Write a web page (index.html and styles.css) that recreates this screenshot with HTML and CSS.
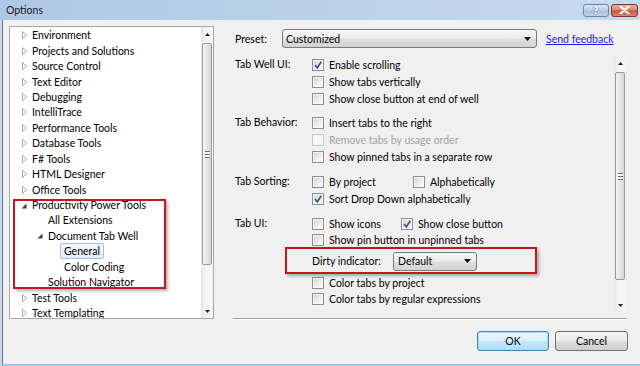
FILE: index.html
```html
<!DOCTYPE html>
<html lang="en">
<head>
    <meta charset="UTF-8">
    <title>Options</title>
    <link rel="stylesheet" href="styles.css">
</head>
<body>
    <div class="window">
        <div class="titlebar">
            <span class="title">Options</span>
            <div class="caption-buttons">
                <span class="cap-btn help">?</span>
                <span class="cap-btn close">
                    <svg width="11" height="8" viewBox="0 0 11 8"><path d="M1.5 0.5 L9.5 7.5 M9.5 0.5 L1.5 7.5" stroke="#fff" stroke-width="2.2" stroke-linecap="round"/></svg>
                </span>
            </div>
        </div>

        <div class="client">
            <div class="main">
                <!-- category tree -->
                <div class="tree">
                    <div class="tree-list">
                        <div class="tree-row lvl0"><span class="expander"><svg width="5" height="8"><path d="M0.5 0.5 L4.5 4 L0.5 7.5 Z" fill="none" stroke="#a8a8a8"/></svg></span><span class="node">Environment</span></div>
                        <div class="tree-row lvl0"><span class="expander"><svg width="5" height="8"><path d="M0.5 0.5 L4.5 4 L0.5 7.5 Z" fill="none" stroke="#a8a8a8"/></svg></span><span class="node">Projects and Solutions</span></div>
                        <div class="tree-row lvl0"><span class="expander"><svg width="5" height="8"><path d="M0.5 0.5 L4.5 4 L0.5 7.5 Z" fill="none" stroke="#a8a8a8"/></svg></span><span class="node">Source Control</span></div>
                        <div class="tree-row lvl0"><span class="expander"><svg width="5" height="8"><path d="M0.5 0.5 L4.5 4 L0.5 7.5 Z" fill="none" stroke="#a8a8a8"/></svg></span><span class="node">Text Editor</span></div>
                        <div class="tree-row lvl0"><span class="expander"><svg width="5" height="8"><path d="M0.5 0.5 L4.5 4 L0.5 7.5 Z" fill="none" stroke="#a8a8a8"/></svg></span><span class="node">Debugging</span></div>
                        <div class="tree-row lvl0"><span class="expander"><svg width="5" height="8"><path d="M0.5 0.5 L4.5 4 L0.5 7.5 Z" fill="none" stroke="#a8a8a8"/></svg></span><span class="node">IntelliTrace</span></div>
                        <div class="tree-row lvl0"><span class="expander"><svg width="5" height="8"><path d="M0.5 0.5 L4.5 4 L0.5 7.5 Z" fill="none" stroke="#a8a8a8"/></svg></span><span class="node">Performance Tools</span></div>
                        <div class="tree-row lvl0"><span class="expander"><svg width="5" height="8"><path d="M0.5 0.5 L4.5 4 L0.5 7.5 Z" fill="none" stroke="#a8a8a8"/></svg></span><span class="node">Database Tools</span></div>
                        <div class="tree-row lvl0"><span class="expander"><svg width="5" height="8"><path d="M0.5 0.5 L4.5 4 L0.5 7.5 Z" fill="none" stroke="#a8a8a8"/></svg></span><span class="node">F# Tools</span></div>
                        <div class="tree-row lvl0"><span class="expander"><svg width="5" height="8"><path d="M0.5 0.5 L4.5 4 L0.5 7.5 Z" fill="none" stroke="#a8a8a8"/></svg></span><span class="node">HTML Designer</span></div>
                        <div class="tree-row lvl0"><span class="expander"><svg width="5" height="8"><path d="M0.5 0.5 L4.5 4 L0.5 7.5 Z" fill="none" stroke="#a8a8a8"/></svg></span><span class="node">Office Tools</span></div>
                        <div class="tree-row lvl0"><span class="expander open"><svg width="6" height="6"><path d="M5.5 0.5 L5.5 5.5 L0.5 5.5 Z" fill="#3c3c3c"/></svg></span><span class="node">Productivity Power Tools</span></div>
                        <div class="tree-row lvl1"><span class="expander"></span><span class="node">All Extensions</span></div>
                        <div class="tree-row lvl1"><span class="expander open"><svg width="6" height="6"><path d="M5.5 0.5 L5.5 5.5 L0.5 5.5 Z" fill="#3c3c3c"/></svg></span><span class="node">Document Tab Well</span></div>
                        <div class="tree-row lvl2"><span class="expander"></span><span class="node selected">General</span></div>
                        <div class="tree-row lvl2"><span class="expander"></span><span class="node">Color Coding</span></div>
                        <div class="tree-row lvl1"><span class="expander"></span><span class="node">Solution Navigator</span></div>
                        <div class="tree-row lvl0"><span class="expander"><svg width="5" height="8"><path d="M0.5 0.5 L4.5 4 L0.5 7.5 Z" fill="none" stroke="#a8a8a8"/></svg></span><span class="node">Test Tools</span></div>
                        <div class="tree-row lvl0"><span class="expander"><svg width="5" height="8"><path d="M0.5 0.5 L4.5 4 L0.5 7.5 Z" fill="none" stroke="#a8a8a8"/></svg></span><span class="node">Text Templating</span></div>
                    </div>
                    <div class="scrollbar">
                        <div class="sb-arrow"><svg width="5" height="3"><path d="M2.5 0 L5 3 L0 3 Z" fill="#222"/></svg></div>
                        <div class="sb-thumb"><span class="grip"></span></div>
                        <div class="sb-track"></div>
                        <div class="sb-arrow"><svg width="5" height="3"><path d="M0 0 L5 0 L2.5 3 Z" fill="#222"/></svg></div>
                    </div>
                    <div class="callout tree-callout"></div>
                </div>

                <!-- settings page -->
                <div class="settings">
                    <div class="preset-row">
                        <span class="preset-label">Preset:</span>
                        <div class="combo preset-combo">
                            <span>Customized</span>
                            <svg width="7" height="4"><path d="M0 0 L7 0 L3.5 4 Z" fill="#111"/></svg>
                        </div>
                        <a class="link" href="#">Send feedback</a>
                    </div>

                    <div class="page">
                        <div class="options">
                            <div class="group">
                                <div class="group-label">Tab Well UI:</div>
                                <div class="controls">
                                    <div class="opt-row"><span class="check-item"><span class="checkbox checked"><svg width="10" height="10"><path d="M2 5 L4.3 7.8 L8.3 1.8" fill="none" stroke="#3d5282" stroke-width="1.6"/></svg></span>Enable scrolling</span></div>
                                    <div class="opt-row"><span class="check-item"><span class="checkbox"></span>Show tabs vertically</span></div>
                                    <div class="opt-row"><span class="check-item"><span class="checkbox"></span>Show close button at end of well</span></div>
                                </div>
                            </div>

                            <div class="group">
                                <div class="group-label">Tab Behavior:</div>
                                <div class="controls">
                                    <div class="opt-row"><span class="check-item"><span class="checkbox"></span>Insert tabs to the right</span></div>
                                    <div class="opt-row"><span class="check-item disabled"><span class="checkbox"></span>Remove tabs by usage order</span></div>
                                    <div class="opt-row"><span class="check-item"><span class="checkbox"></span>Show pinned tabs in a separate row</span></div>
                                </div>
                            </div>

                            <div class="group">
                                <div class="group-label">Tab Sorting:</div>
                                <div class="controls">
                                    <div class="opt-row">
                                        <span class="check-item by-project"><span class="checkbox"></span>By project</span>
                                        <span class="check-item"><span class="checkbox"></span>Alphabetically</span>
                                    </div>
                                    <div class="opt-row"><span class="check-item"><span class="checkbox checked"><svg width="10" height="10"><path d="M2 5 L4.3 7.8 L8.3 1.8" fill="none" stroke="#3d5282" stroke-width="1.6"/></svg></span>Sort Drop Down alphabetically</span></div>
                                </div>
                            </div>

                            <div class="group">
                                <div class="group-label">Tab UI:</div>
                                <div class="controls">
                                    <div class="opt-row">
                                        <span class="check-item show-icons"><span class="checkbox"></span>Show icons</span>
                                        <span class="check-item"><span class="checkbox checked"><svg width="10" height="10"><path d="M2 5 L4.3 7.8 L8.3 1.8" fill="none" stroke="#3d5282" stroke-width="1.6"/></svg></span>Show close button</span>
                                    </div>
                                    <div class="opt-row short"><span class="check-item"><span class="checkbox"></span>Show pin button in unpinned tabs</span></div>
                                    <div class="dirty-row">
                                        <span class="dirty-label">Dirty indicator:</span>
                                        <div class="combo dirty-combo">
                                            <span>Default</span>
                                            <svg width="7" height="4"><path d="M0 0 L7 0 L3.5 4 Z" fill="#111"/></svg>
                                        </div>
                                        <div class="callout dirty-callout"></div>
                                    </div>
                                    <div class="opt-row"><span class="check-item"><span class="checkbox"></span>Color tabs by project</span></div>
                                    <div class="opt-row short"><span class="check-item"><span class="checkbox"></span>Color tabs by regular expressions</span></div>
                                </div>
                            </div>
                        </div>
                        <div class="scrollbar">
                            <div class="sb-arrow"><svg width="5" height="3"><path d="M2.5 0 L5 3 L0 3 Z" fill="#222"/></svg></div>
                            <div class="sb-thumb"><span class="grip"></span></div>
                            <div class="sb-track"></div>
                            <div class="sb-arrow"><svg width="5" height="3"><path d="M0 0 L5 0 L2.5 3 Z" fill="#222"/></svg></div>
                        </div>
                    </div>
                </div>
            </div>

            <div class="footer">
                <span class="btn default">OK</span>
                <span class="btn cancel">Cancel</span>
            </div>
        </div>
    </div>
</body>
</html>
```

FILE: styles.css
```css
* {
    box-sizing: border-box;
}

html, body {
    margin: 0;
    padding: 0;
}

body {
    width: 640px;
    height: 366px;
    overflow: hidden;
    font-family: 'Lato', 'Liberation Sans', sans-serif;
    font-size: 10.5px;
    color: #000;
    background: #c6d9ee;
}

.window {
    display: flex;
    flex-direction: column;
    height: 366px;
}

/* Title bar */
.titlebar {
    height: 20px;
    display: flex;
    align-items: center;
    justify-content: space-between;
    padding: 0 2px 0 6px;
    background: linear-gradient(to right, #aec8e5, #bcd2eb 55%, #c7daef);
}

.title {
    color: #1b1b1b;
    font-size: 10.5px;
}

.caption-buttons {
    display: flex;
    gap: 2px;
}

.cap-btn {
    height: 13px;
    border-radius: 3px;
    display: flex;
    align-items: center;
    justify-content: center;
}

.cap-btn.help {
    width: 26px;
    border: 1px solid #6a86a8;
    background: linear-gradient(#dce7f4, #bccfe6 48%, #a5bddb 52%, #bdd1e8);
    color: #fff;
    font-family: 'DejaVu Sans', sans-serif;
    font-size: 10px;
    font-weight: bold;
    text-shadow: 0 0 1px #40536d, 0 0 1px #40536d;
}

.cap-btn.close {
    width: 27px;
    border: 1px solid #8a3427;
    background: linear-gradient(#eab0a2, #d98069 48%, #c8533c 52%, #d8866f);
}

/* Client area */
.client {
    flex: 1;
    margin-left: 2px;
    border-left: 1px solid #6b7b8c;
    border-bottom: 2px solid #93cde8;
    background: #f0f0f0;
    display: flex;
    flex-direction: column;
}

.main {
    display: flex;
    padding: 6px 0 0 6px;
}

/* Tree */
.tree {
    position: relative;
    width: 205px;
    height: 293px;
    border: 1px solid #a6a9ae;
    background: #fff;
    display: flex;
    overflow: hidden;
}

.tree-list {
    flex: 1;
    padding-top: 0.5px;
}

.tree-row {
    height: 15.45px;
    display: flex;
    align-items: center;
    white-space: nowrap;
}

.tree-row.lvl0 { padding-left: 11px; }
.tree-row.lvl1 { padding-left: 27px; }
.tree-row.lvl2 { padding-left: 43px; }

.expander {
    width: 7px;
    display: flex;
    align-items: center;
    padding-left: 1px;
}

.expander.open {
    padding-left: 0;
    padding-top: 1px;
}

.node {
    padding: 0 3px;
    border: 1px solid transparent;
    border-radius: 2px;
    line-height: 14px;
}

.node.selected {
    border-color: #a4c0e2;
    background: linear-gradient(#f4f8fd, #e2ecf8);
}

/* Red annotation frames */
.callout {
    position: absolute;
    border: 2px solid #c4161c;
    box-shadow: 2px 2px 3px rgba(0, 0, 0, 0.3);
    pointer-events: none;
}

.tree-callout {
    left: 3px;
    top: 172px;
    width: 153px;
    height: 90px;
}

/* Scrollbars */
.scrollbar {
    width: 12px;
    display: flex;
    flex-direction: column;
    background: linear-gradient(to right, #e4e4e4, #f4f4f4 35%, #f6f6f6);
}

.sb-arrow {
    height: 14px;
    display: flex;
    align-items: center;
    justify-content: center;
}

.sb-thumb {
    margin: 2px 1px 0 1px;
    border: 1px solid #9a9a9a;
    border-radius: 2px;
    background: linear-gradient(to right, #f4f4f4, #e6e6e6 50%, #d6d6d6);
    display: flex;
    align-items: center;
    justify-content: center;
}

.tree .sb-thumb { height: 222px; }
.page .sb-thumb { height: 208px; }

.grip {
    width: 5px;
    height: 7px;
    background: repeating-linear-gradient(#6a6a6a 0 1px, #fafafa 1px 3px);
}

.sb-track {
    flex: 1;
}

/* Settings page */
.settings {
    position: relative;
    margin-left: 19px;
    width: 394px;
    height: 293px;
    padding-top: 3px;
    border-bottom: 1px solid #a0a0a0;
    box-shadow: 0 1px 0 #fff;
}

.preset-row {
    display: flex;
    align-items: center;
    height: 19px;
    padding-left: 2px;
}

.preset-label {
    width: 47px;
}

.combo {
    height: 19px;
    display: flex;
    align-items: center;
    justify-content: space-between;
    padding: 0 5px 0 3px;
    border: 1px solid #7a7a7a;
    border-radius: 3px;
    background: linear-gradient(#f6f6f6, #ececec 48%, #dfdfdf 52%, #d3d3d3);
}

.preset-combo {
    width: 255px;
}

.link {
    margin-left: 9px;
    color: #1a1aff;
    text-decoration: underline;
}

.page {
    display: flex;
    height: 256px;
    margin-top: 8px;
}

.options {
    flex: 1;
    padding-left: 2px;
}

.page .scrollbar {
    height: 255px;
    margin-top: 1px;
    margin-right: 1px;
}

.page .sb-arrow:first-child {
    height: 13px;
}

.group {
    display: flex;
}

.group:nth-child(1) { margin-bottom: 7px; }
.group:nth-child(2),
.group:nth-child(3) { margin-bottom: 8px; }

.group-label {
    width: 77px;
    height: 17px;
    line-height: 17px;
}

.controls {
    flex: 1;
    position: relative;
}

.opt-row {
    height: 17px;
    display: flex;
    align-items: center;
}

.opt-row.short {
    height: 16px;
}

.check-item {
    display: flex;
    align-items: center;
    gap: 5px;
    white-space: nowrap;
}

.check-item.by-project { width: 101px; }
.check-item.show-icons { width: 89px; }

.check-item.disabled {
    color: #a3a3a3;
}

.checkbox {
    width: 12px;
    height: 12px;
    border: 1px solid #8e8f8f;
    background: linear-gradient(135deg, #cfd3d8, #f2f3f4 70%, #fbfbfb);
    box-shadow: inset 0 0 0 1px #f6f6f6;
    display: flex;
    align-items: center;
    justify-content: center;
}

.disabled .checkbox {
    border-color: #c7c7c7;
    background: #f6f6f6;
}

.dirty-row {
    position: relative;
    height: 26px;
    display: flex;
    align-items: center;
}

.dirty-label {
    width: 81px;
}

.dirty-combo {
    width: 84px;
    padding-left: 4px;
}

.dirty-callout {
    left: -27px;
    top: -1px;
    width: 252px;
    height: 27px;
}

/* Buttons */
.footer {
    display: flex;
    justify-content: flex-end;
    gap: 6px;
    padding: 12px 12px 0 0;
}

.btn {
    width: 73px;
    height: 20px;
    display: flex;
    align-items: center;
    justify-content: center;
    border: 1px solid #707070;
    border-radius: 3px;
    background: linear-gradient(#f3f3f3, #ebebeb 48%, #dddddd 52%, #cfcfcf);
}

.btn.default {
    width: 72px;
    border-color: #3c86c0;
    background: linear-gradient(#edf7fd, #dcf0fb 48%, #c6e6f7 52%, #b5dcf2);
    box-shadow: inset 0 0 0 1px #a8dcf6;
}
```
